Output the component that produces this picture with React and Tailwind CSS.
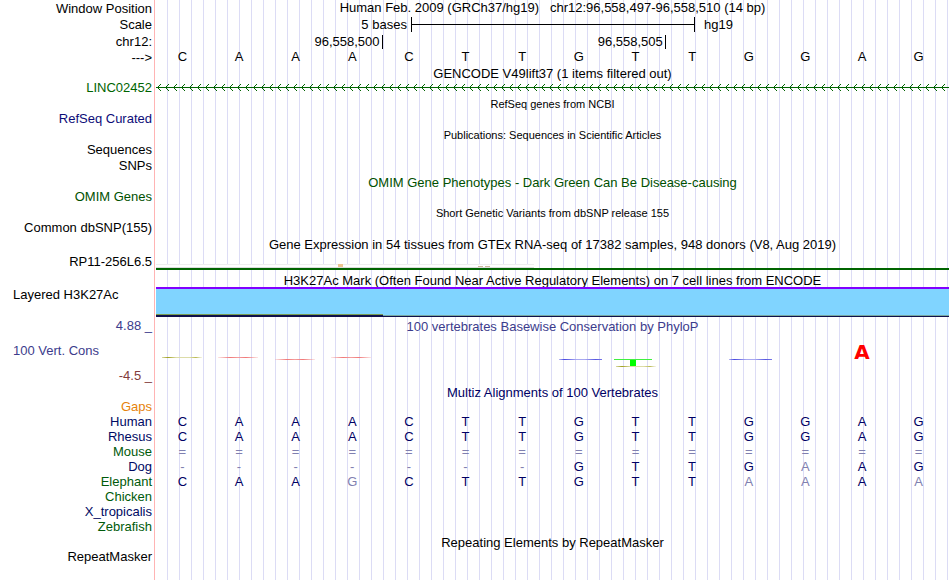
const SEQ = 'CAAACTTGTTGGAG';

const SPECIES = [
  { name: 'Gaps', color: 'text-[#e6820a]', bases: '' },
  { name: 'Human', color: 'text-[#000a64]', bases: SEQ },
  { name: 'Rhesus', color: 'text-[#000a64]', bases: SEQ },
  { name: 'Mouse', color: 'text-[#005a0a]', bases: '==============' },
  { name: 'Dog', color: 'text-[#000a64]', bases: '-------GTTGAAG' },
  { name: 'Elephant', color: 'text-[#005a0a]', bases: 'CAAGCTTGTTAAAA' },
  { name: 'Chicken', color: 'text-[#005a0a]', bases: '' },
  { name: 'X_tropicalis', color: 'text-[#000a64]', bases: '' },
  { name: 'Zebrafish', color: 'text-[#005a0a]', bases: '' },
];

// height of the row picks the line box, everything is centred in it
function Row({ label, color = 'text-black', height = 'h-4', children }) {
  return (
    <div className={`flex items-center ${height}`}>
      <div className={`w-[156px] shrink-0 pr-1 text-right ${color}`}>{label}</div>
      <div className="min-w-0 flex-1 h-full">{children}</div>
    </div>
  );
}

function Title({ color = 'text-black', small, children }) {
  return (
    <Row height="h-[15px]">
      <div
        className={`h-full flex items-center justify-center whitespace-pre ${color} ${
          small ? 'pt-px text-[11px]' : 'pt-[3px]'
        }`}
      >
        {children}
      </div>
    </Row>
  );
}

function IntronLine() {
  return (
    <svg className="block w-full h-[7px]" shapeRendering="crispEdges" aria-hidden="true">
      <defs>
        <pattern id="strand" width="8" height="7" patternUnits="userSpaceOnUse">
          <path
            d="M1 3h1v1h-1zM2 2h1v1h-1zM3 1h1v1h-1zM4 0h1v1h-1zM2 4h1v1h-1zM3 5h1v1h-1zM4 6h1v1h-1z"
            fill="#006400"
          />
        </pattern>
      </defs>
      <rect width="100%" height="7" fill="url(#strand)" />
      <rect y="3" width="100%" height="1" fill="#006400" />
    </svg>
  );
}

function ExpressionBars() {
  return (
    <svg
      className="block w-full h-[6px]"
      viewBox="0 0 793 6"
      preserveAspectRatio="none"
      shapeRendering="crispEdges"
      aria-hidden="true"
    >
      <rect width="378" height="4" fill="#fff" />
      <rect width="378" height="1" fill="#eeeeee" />
      <rect y="3" width="378" height="1" fill="#dcdcdc" />
      <rect x="182" width="5" height="3" fill="#eec591" />
      <rect x="322" y="2" width="5" height="1" fill="#cdb79e" />
      <rect x="329" y="2" width="5" height="1" fill="#cdb79e" />
      <rect y="4" width="793" height="2" fill="#006400" />
    </svg>
  );
}

function HistoneSignal() {
  return (
    <svg
      className="block w-full h-[30px]"
      viewBox="0 0 793 30"
      preserveAspectRatio="none"
      shapeRendering="crispEdges"
      aria-hidden="true"
    >
      <rect width="793" height="30" fill="#80d4ff" />
      <rect width="793" height="2" fill="#8000ff" />
      <rect y="28" width="793" height="1" fill="#78a8a0" />
      <rect y="29" width="793" height="1" fill="#10104c" />
      <rect y="27" width="227" height="1" fill="#789c50" />
      <rect y="28" width="227" height="1" fill="#10104c" />
    </svg>
  );
}

function ConservationMarks() {
  return (
    <svg
      className="absolute inset-0 w-full h-full"
      viewBox="0 0 793 50"
      preserveAspectRatio="none"
      shapeRendering="crispEdges"
      aria-hidden="true"
    >
      <defs>
        <linearGradient id="olive">
          <stop offset="0" stopColor="#a0a020" stopOpacity="0.4" />
          <stop offset="0.15" stopColor="#a0a020" />
          <stop offset="0.35" stopColor="#dcdca8" />
          <stop offset="0.7" stopColor="#dcdca8" />
          <stop offset="0.85" stopColor="#b8b850" />
          <stop offset="1" stopColor="#dcdca8" stopOpacity="0.3" />
        </linearGradient>
        <linearGradient id="rose">
          <stop offset="0" stopColor="#f08080" stopOpacity="0.2" />
          <stop offset="0.3" stopColor="#f07878" />
          <stop offset="0.5" stopColor="#f4a0a0" />
          <stop offset="0.7" stopColor="#f07878" />
          <stop offset="1" stopColor="#f08080" stopOpacity="0.2" />
        </linearGradient>
        <linearGradient id="indigo">
          <stop offset="0" stopColor="#5050e0" stopOpacity="0.4" />
          <stop offset="0.12" stopColor="#4848e0" />
          <stop offset="0.4" stopColor="#a8a8f0" />
          <stop offset="0.6" stopColor="#a8a8f0" />
          <stop offset="0.85" stopColor="#5858e0" />
          <stop offset="1" stopColor="#7878e8" />
        </linearGradient>
      </defs>
      <rect x="6" y="23" width="40" height="1" fill="url(#olive)" />
      <rect x="62" y="23" width="40" height="1" fill="url(#rose)" />
      <rect x="119" y="25" width="40" height="1" fill="url(#rose)" />
      <rect x="175" y="23" width="40" height="1" fill="url(#rose)" />
      <rect x="403" y="25" width="43" height="1" fill="url(#indigo)" />
      <rect x="458" y="25" width="38" height="1" fill="#40f040" />
      <rect x="474" y="26" width="6" height="6" fill="#00ff00" />
      <rect x="460" y="32" width="40" height="1" fill="url(#olive)" />
      <rect x="573" y="25" width="43" height="1" fill="url(#indigo)" />
    </svg>
  );
}

function Alignment() {
  return (
    <table className="w-full table-fixed border-collapse">
      <tbody>
        {SPECIES.map((s) => (
          <tr key={s.name} className="h-[15px]">
            <th scope="row" className={`w-[156px] p-0 pr-1 text-right font-normal leading-[15px] ${s.color}`}>
              {s.name}
            </th>
            {SEQ.split('').map((ref, i) => (
              <td
                key={i}
                className={`p-0 pr-1 text-center leading-[15px] ${
                  s.bases[i] === ref ? 'text-[#000064]' : 'text-[#8080b0]'
                }`}
              >
                {s.bases[i]}
              </td>
            ))}
          </tr>
        ))}
      </tbody>
    </table>
  );
}

export default function App() {
  return (
    <main className="min-h-screen pr-px overflow-hidden bg-white font-['Liberation_Sans',Arial,sans-serif] text-[13px] leading-4 text-black bg-[linear-gradient(to_right,#fff_154px,#ffb4b4_154px,#ffb4b4_155px,#fff_155px,#fff_156px,transparent_156px),repeating-linear-gradient(to_right,transparent_0px,transparent_11px,#dcdcf5_11px,#dcdcf5_12px)]">
      <Row label="Window Position" height="h-[17px]">
        <h1 className="text-center whitespace-pre">
          {'Human Feb. 2009 (GRCh37/hg19)   chr12:96,558,497-96,558,510 (14 bp)'}
        </h1>
      </Row>
      <Row label="Scale">
        <div className="grid grid-cols-28 h-full items-start">
          <div className="col-span-9 pr-1 text-right">5 bases</div>
          <div className="col-span-10 h-[15px] -mr-px border-x border-black flex items-center">
            <div className="w-full h-px bg-black" />
          </div>
          <div className="col-span-9 pl-[10px]">hg19</div>
        </div>
      </Row>
      <Row label="chr12:" height="h-[17px]">
        <div className="grid grid-cols-14 h-full items-center leading-[14px]">
          <div className="col-span-4 border-r border-black pr-0.5 text-right">96,558,500</div>
          <div className="col-span-5 border-r border-black pr-0.5 text-right">96,558,505</div>
        </div>
      </Row>
      <Row label="--->" height="h-[15px]">
        <div className="grid grid-cols-14 leading-[14px]">
          {SEQ.split('').map((b, i) => (
            <span key={i} className="pr-1 text-center">{b}</span>
          ))}
        </div>
      </Row>

      <Title>GENCODE V49lift37 (1 items filtered out)</Title>
      <Row label="LINC02452" color="text-[#006400]">
        <div className="pt-1">
          <IntronLine />
        </div>
      </Row>
      <Title small>RefSeq genes from NCBI</Title>
      <Row label="RefSeq Curated" color="text-[#0c0c78]" />
      <Title small>Publications: Sequences in Scientific Articles</Title>
      <Row label="Sequences" />
      <Row label="SNPs" />
      <Title color="text-[#005000]">OMIM Gene Phenotypes - Dark Green Can Be Disease-causing</Title>
      <Row label="OMIM Genes" color="text-[#005000]" />
      <Title small>Short Genetic Variants from dbSNP release 155</Title>
      <Row label="Common dbSNP(155)" />
      <Title>Gene Expression in 54 tissues from GTEx RNA-seq of 17382 samples, 948 donors (V8, Aug 2019)</Title>
      <Row label="RP11-256L6.5" height="h-[21px]">
        <div className="h-full flex flex-col justify-end pb-0.5">
          <ExpressionBars />
        </div>
      </Row>

      <Title>H3K27Ac Mark (Often Found Near Active Regulatory Elements) on 7 cell lines from ENCODE</Title>
      <div className="flex">
        <div className="w-[156px] shrink-0 pl-[13px]">Layered H3K27Ac</div>
        <div className="min-w-0 flex-1">
          <HistoneSignal />
        </div>
      </div>

      <div className="flex">
        <div className="w-[156px] shrink-0 flex flex-col justify-between pt-px pl-[13px] pr-1 text-[#3c3c8c]">
          <div className="text-right">4.88 _</div>
          <div>100 Vert. Cons</div>
          <div className="text-right text-[#823c3c]">-4.5 _</div>
        </div>
        <div className="min-w-0 flex-1">
          <div className="h-[17px] leading-[19px] text-center text-[#3c3c8c]">
            100 vertebrates Basewise Conservation by PhyloP
          </div>
          <div className="relative h-[50px]">
            <ConservationMarks />
            <div className="grid grid-cols-14 pt-2">
              <span className="col-start-13 pr-1 text-center font-['DejaVu_Sans',sans-serif] text-[20px] leading-5 font-bold text-[#ff0000]">
                A
              </span>
            </div>
          </div>
        </div>
      </div>

      <Title color="text-[#000064]">Multiz Alignments of 100 Vertebrates</Title>
      <Alignment />

      <Title>Repeating Elements by RepeatMasker</Title>
      <Row label="RepeatMasker" />
    </main>
  );
}
